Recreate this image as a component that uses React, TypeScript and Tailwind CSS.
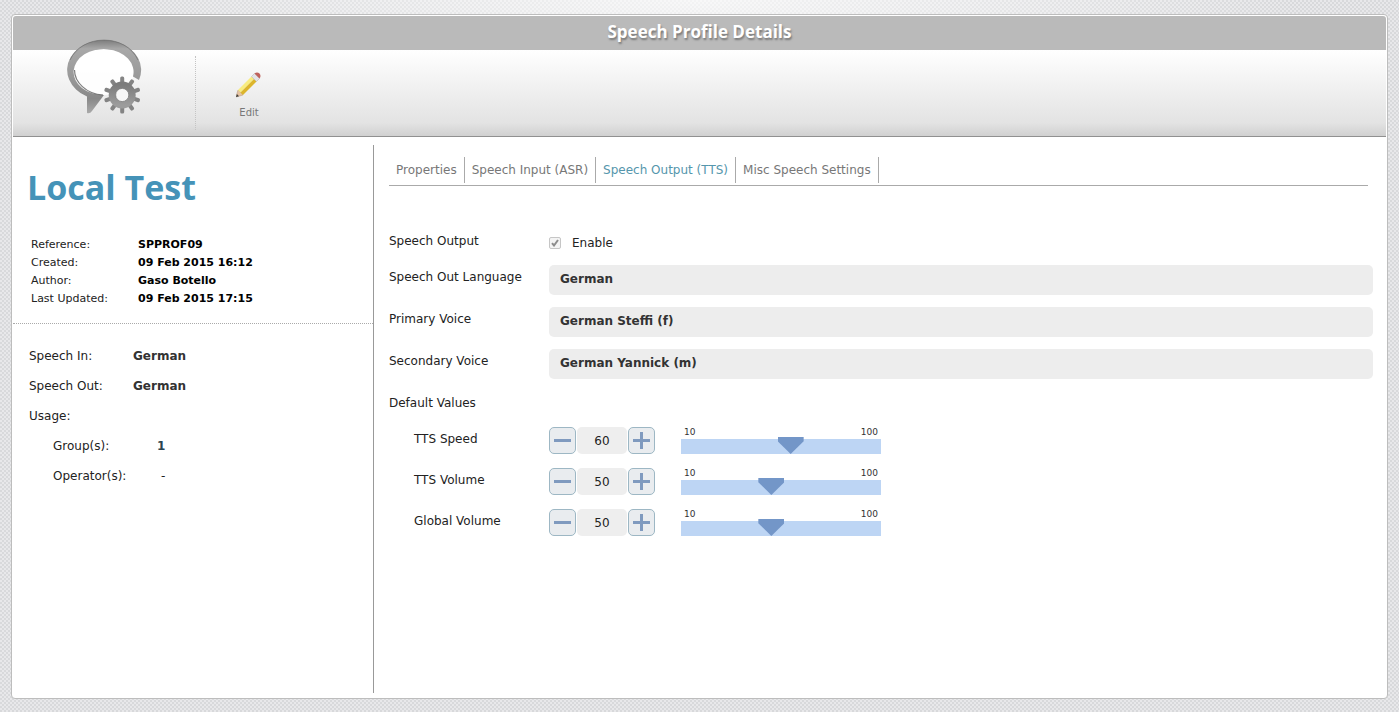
import React, { useState } from "react";

const TABS = ["Properties", "Speech Input (ASR)", "Speech Output (TTS)", "Misc Speech Settings"];

const META = [
  { label: "Reference:", value: "SPPROF09" },
  { label: "Created:", value: "09 Feb 2015 16:12" },
  { label: "Author:", value: "Gaso Botello" },
  { label: "Last Updated:", value: "09 Feb 2015 17:15" }
];

const FIELDS = [
  { id: "language", label: "Speech Out Language", value: "German" },
  { id: "primary", label: "Primary Voice", value: "German Steffi (f)" },
  { id: "secondary", label: "Secondary Voice", value: "German Yannick (m)" }
];

const LEVELS = [
  { id: "tts-speed", label: "TTS Speed", initial: 60 },
  { id: "tts-volume", label: "TTS Volume", initial: 50 },
  { id: "global-volume", label: "Global Volume", initial: 50 }
];

const GEAR_TEETH = [0, 36, 72, 108, 144, 180, 216, 252, 288, 324];

function SpeechIcon() {
  return (
    <svg width="76" height="76" viewBox="0 0 76 76" aria-hidden="true">
      <defs>
        <linearGradient id="bubble" x1="0" y1="0" x2="0" y2="1">
          <stop offset="0" stopColor="#7c7c7c" />
          <stop offset="0.12" stopColor="#a8a8a8" />
          <stop offset="0.5" stopColor="#999" />
          <stop offset="0.8" stopColor="#888" />
          <stop offset="1" stopColor="#aaa" />
        </linearGradient>
        <linearGradient id="gear" x1="0" y1="0" x2="0" y2="1">
          <stop offset="0" stopColor="#7c7c7c" />
          <stop offset="1" stopColor="#9c9c9c" />
        </linearGradient>
      </defs>
      <ellipse cx="38" cy="33" rx="30" ry="23" fill="#fff" fillOpacity="0.9" />
      <path
        d="M73 41L67 37.500A30 23 0 1 0 38 56L26 72Q24 75 21 74V57.500A37 30 0 1 1 73 41Z"
        fill="url(#bubble)"
      />
      <path d="M4 21C16 -5.500 60 -5.500 72 21" fill="none" stroke="#6c6c6c" strokeWidth="1" strokeOpacity="0.7" />
      <path d="M8.500 31C8.500 43 20 55 37 56" fill="none" stroke="#5f5f5f" strokeWidth="1.200" strokeOpacity="0.8" />
      <g fill="#848484">
        {GEAR_TEETH.map(angle => (
          <rect key={angle} x="54.200" y="37.500" width="4" height="8" rx="1.500" transform={`rotate(${angle} 56.200 56)`} />
        ))}
      </g>
      <circle cx="56.200" cy="56" r="10" fill="none" stroke="url(#gear)" strokeWidth="7" />
      <circle cx="56.200" cy="56" r="6.600" fill="#f6f6f6" stroke="#777" strokeWidth="0.800" />
    </svg>
  );
}

function PencilIcon() {
  return (
    <svg width="26" height="26" viewBox="0 0 26 26" aria-hidden="true">
      <path d="M0 25L2 18L7 23Z" fill="#e5c3a2" stroke="#b39374" strokeWidth="0.500" />
      <path d="M0 25L0.900 22L3 24.200Z" fill="#3c3c3c" />
      <path d="M2 18L15.500 4.500L18 7L4.500 20.500Z" fill="#f8ec80" />
      <path d="M4.500 20.500L18 7L20.500 9.500L7 23Z" fill="#dcb52c" />
      <path d="M15.500 4.500L18.500 1.500L23.500 6.500L20.500 9.500Z" fill="#e3e3e6" stroke="#aaa" strokeWidth="0.500" />
      <path d="M18.500 1.500Q21 -0.500 23.500 1.500Q25.500 4 23.500 6.500Z" fill="#bf625c" />
    </svg>
  );
}

function LevelRow({ id, label, initial }: { id: string; label: string; initial: number }) {
  const [value, setValue] = useState(initial);
  const step = (by: number) => setValue(v => Math.min(100, Math.max(10, v + by)));
  const buttonClass =
    "h-[27px] w-[27px] shrink-0 flex items-center justify-center rounded-[5px] border border-[#9db7c4] bg-[#e9ecef]";

  return (
    <div className="flex items-start">
      <label htmlFor={id} className="w-[160px] shrink-0 pl-[25px] pt-1 leading-4">{label}</label>
      <div className="flex gap-px">
        <button type="button" aria-label={`Decrease ${label}`} className={buttonClass} onClick={() => step(-1)}>
          <svg width="17" height="17" viewBox="0 0 17 17"><path d="M0 8.500H17" stroke="#7f9abf" strokeWidth="3" /></svg>
        </button>
        <input
          id={id}
          value={value}
          readOnly
          className="h-[27px] w-[50px] rounded-[5px] bg-[#eee] text-center outline-none"
        />
        <button type="button" aria-label={`Increase ${label}`} className={buttonClass} onClick={() => step(1)}>
          <svg width="17" height="17" viewBox="0 0 17 17"><path d="M0 8.500H17M8.500 0V17" stroke="#7f9abf" strokeWidth="3" /></svg>
        </button>
      </div>
      <div className="ml-[26px] w-[200px]">
        <div className="flex h-[10px] justify-between px-[3px] text-[9px] leading-[10px] text-[#333]">
          <span>10</span>
          <span>100</span>
        </div>
        <input
          type="range"
          aria-label={label}
          min={10}
          max={100}
          value={value}
          onChange={e => setValue(Number(e.target.value))}
          className="block h-[17px] w-full appearance-none bg-[linear-gradient(transparent_2px,#bdd5f4_2px)] [&::-webkit-slider-thumb]:h-[17px] [&::-webkit-slider-thumb]:w-[26px] [&::-webkit-slider-thumb]:appearance-none [&::-webkit-slider-thumb]:bg-[#7396c8] [&::-webkit-slider-thumb]:[clip-path:polygon(0_0,100%_0,100%_25%,50%_100%,0_25%)]"
        />
      </div>
    </div>
  );
}

export default function App() {
  return (
    <div className="flex min-h-screen flex-col bg-[#e4e5e7] bg-[radial-gradient(ellipse_600px_80px_at_50%_0,rgba(255,255,255,0.7),transparent),conic-gradient(#d8d9db_25%,#e8e8ea_0_50%,#d8d9db_0_75%,#e8e8ea_0)] bg-[size:100%_100%,4px_4px] px-[11px] pt-[14px] pb-[13px] font-['DejaVu_Sans',sans-serif] text-[12px] text-[#222]">
      <div className="flex flex-1 flex-col rounded-[4px] border border-[#bdbdbd] bg-white p-px">
        <h1 className="h-[34px] rounded-t-[3px] bg-[#bababa] text-center font-['Open_Sans',sans-serif] text-[17px] leading-8 font-bold text-white [text-shadow:1px_2px_2px_#777]">
          Speech Profile Details
        </h1>

        {/* Toolbar */}
        <div className="flex h-[87px] border-b border-[#909090] bg-[linear-gradient(#fff,#e3e3e3_85%,#d0d0d0)]">
          <div className="my-1.5 flex w-[183px] shrink-0 items-start justify-center border-r border-dotted border-[#c4c4c4]">
            <div className="-mt-[17px]">
              <SpeechIcon />
            </div>
          </div>
          <button type="button" className="ml-[26px] flex w-[54px] flex-col items-center pt-[22px] text-[10px] text-[#777]">
            <PencilIcon />
            <span className="mt-[7px] leading-4">Edit</span>
          </button>
        </div>

        <div className="flex flex-1 pt-2 pb-1">
          {/* Profile summary */}
          <aside className="w-[361px] shrink-0 border-r border-[#999]">
            <h2 className="px-[14px] pt-5 font-['Open_Sans',sans-serif] text-[34px] leading-[44px] font-bold text-[#4593b8]">Local Test</h2>
            <dl className="mt-[27px] border-b border-dotted border-[#aaa] px-[18px] pb-[15px] text-[11px] leading-[18px] text-black">
              {META.map(item => (
                <div key={item.label} className="flex">
                  <dt className="w-[107px] text-[#222]">{item.label}</dt>
                  <dd className="font-bold">{item.value}</dd>
                </div>
              ))}
            </dl>
            <dl className="px-4 pt-[17px] leading-[30px]">
              <div className="flex">
                <dt className="w-[104px]">Speech In:</dt>
                <dd className="font-bold text-[#333]">German</dd>
              </div>
              <div className="flex">
                <dt className="w-[104px]">Speech Out:</dt>
                <dd className="font-bold text-[#333]">German</dd>
              </div>
              <div>
                <dt>Usage:</dt>
              </div>
              <div className="flex pl-6">
                <dt className="w-[104px]">Group(s):</dt>
                <dd className="font-bold text-[#2b4450]">1</dd>
              </div>
              <div className="flex pl-6">
                <dt className="w-[108px]">Operator(s):</dt>
                <dd>-</dd>
              </div>
            </dl>
          </aside>

          <main className="min-w-0 flex-1 pt-3 pr-[13px] pl-[15px]">
            <nav className="mr-[5px] flex border-b border-[#aaa] pb-0.5">
              {TABS.map(tab => (
                <a
                  key={tab}
                  href="#"
                  className={`border-r border-[#aaa] px-[7px] leading-[26px] ${
                    tab === "Speech Output (TTS)" ? "text-[#5596ac]" : "text-[#777]"
                  }`}
                >
                  {tab}
                </a>
              ))}
            </nav>

            <div className="mt-[47px] flex items-start">
              <span className="w-[160px] shrink-0 leading-4">Speech Output</span>
              <label className="flex items-center gap-[11px] pt-0.5 leading-4">
                <span className="grid h-3 w-3 place-items-center">
                  <input
                    type="checkbox"
                    defaultChecked
                    disabled
                    className="col-start-1 row-start-1 h-3 w-3 appearance-none rounded-[2px] border border-[#c6c6c6] bg-[#f4f4f4]"
                  />
                  <svg className="col-start-1 row-start-1" width="8" height="8" viewBox="0 0 8 8">
                    <path d="M1 4.200L3 6.500L7 1" fill="none" stroke="#8c8c8c" strokeWidth="2" />
                  </svg>
                </span>
                Enable
              </label>
            </div>

            <div className="mt-[14px] flex flex-col gap-3">
              {FIELDS.map(field => (
                <div key={field.id} className="flex items-start">
                  <label htmlFor={field.id} className="w-[160px] shrink-0 pt-1 leading-4">{field.label}</label>
                  <input
                    id={field.id}
                    value={field.value}
                    readOnly
                    className="h-[30px] min-w-0 flex-1 rounded-[5px] bg-[#ededed] px-[11px] pb-[3px] font-bold text-[#333] outline-none"
                  />
                </div>
              ))}
            </div>

            <h3 className="mt-4 leading-4">Default Values</h3>
            <div className="mt-4 flex flex-col gap-[14px]">
              {LEVELS.map(level => (
                <LevelRow key={level.id} {...level} />
              ))}
            </div>
          </main>
        </div>
      </div>
    </div>
  );
}
